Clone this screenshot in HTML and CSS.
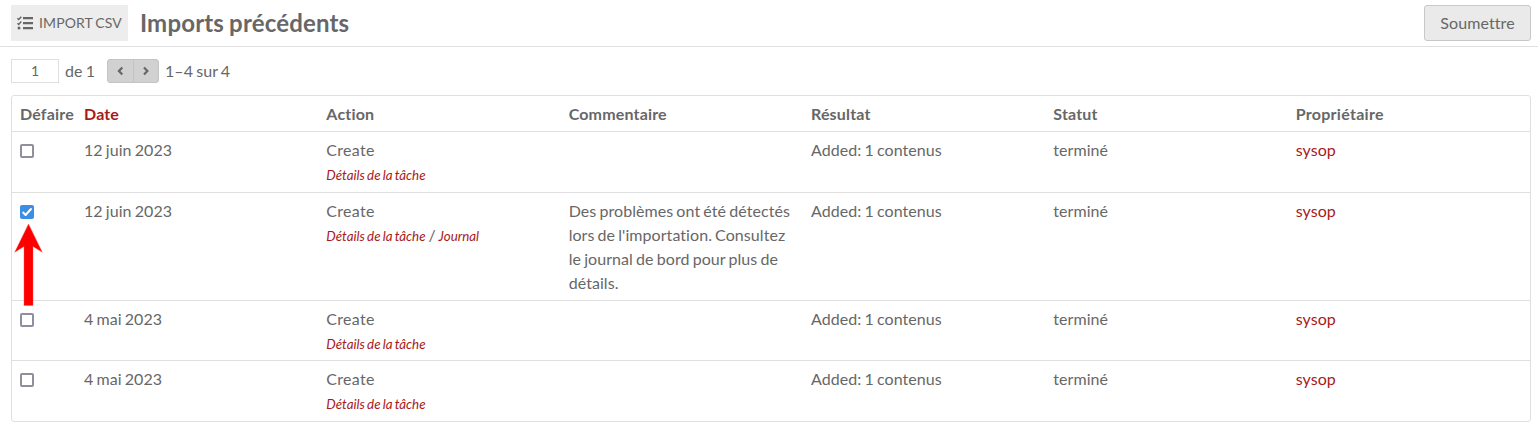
FILE: index.html
```html
<!DOCTYPE html>
<html lang="fr">
<head>
<meta charset="utf-8">
<title>Imports précédents</title>
<link rel="stylesheet" href="styles.css">
</head>
<body>
<header class="page-header">
  <span class="section-label">
    <svg class="tasks-icon" viewBox="0 0 16 14" width="16" height="14"><path d="M.4 2.3 1.7 3.5 4.3.7M.4 7.2 1.7 8.4 4.3 5.6" fill="none" stroke="currentColor" stroke-width="1.5"/><circle cx="2" cy="12" r="1.5" fill="currentColor"/><path d="M6 1h10v2.2H6zM6 6h10v2.2H6zM6 11h10v2.2H6z" fill="currentColor"/></svg>
    <span>IMPORT CSV</span>
  </span>
  <h1 class="title">Imports précédents</h1>
  <button class="submit" type="button">Soumettre</button>
</header>
<nav class="pagination">
  <span class="page-input">1</span>
  <span class="page-count">de 1</span>
  <span class="pager">
    <span class="arrow"><svg viewBox="0 0 8 10" width="8" height="10"><path d="M6.3 1.5 2.9 5l3.4 3.5"/></svg></span>
    <span class="arrow"><svg viewBox="0 0 8 10" width="8" height="10"><path d="M2 1.5 5.4 5 2 8.5"/></svg></span>
  </span>
  <span class="row-count">1–4 sur 4</span>
</nav>
<main class="table">
  <div class="row head">
    <div class="cell">Défaire</div><div class="cell"><a class="link">Date</a></div><div class="cell">Action</div><div class="cell">Commentaire</div><div class="cell">Résultat</div><div class="cell">Statut</div><div class="cell owner">Propriétaire</div>
  </div>
  <div class="row tall">
    <div class="cell"><span class="check"></span></div><div class="cell">12 juin 2023</div>
    <div class="cell"><span class="action">Create</span><div class="details"><a class="link">Détails de la tâche</a></div></div>
    <div class="cell"></div><div class="cell">Added: 1 contenus</div><div class="cell">terminé</div><div class="cell"><a class="link">sysop</a></div>
  </div>
  <div class="row">
    <div class="cell"><span class="check checked"><svg viewBox="0 0 14 14" width="14" height="14"><path d="M3.2 7.5 5.6 10l5.4-6"/></svg></span>
      <svg class="pointer" viewBox="0 0 30 84" width="30" height="84"><path d="M14.5 1 28.3 29.2 19 23.5V82.5H10V23.5L.7 29.2z"/></svg>
    </div><div class="cell">12 juin 2023</div>
    <div class="cell"><span class="action">Create</span><div class="details"><a class="link">Détails de la tâche</a><span class="slash"> / </span><a class="link">Journal</a></div></div>
    <div class="cell">Des problèmes ont été détectés lors de l'importation. Consultez le journal de bord pour plus de détails.</div><div class="cell">Added: 1 contenus</div><div class="cell">terminé</div><div class="cell"><a class="link">sysop</a></div>
  </div>
  <div class="row">
    <div class="cell"><span class="check"></span></div><div class="cell">4 mai 2023</div>
    <div class="cell"><span class="action">Create</span><div class="details"><a class="link">Détails de la tâche</a></div></div>
    <div class="cell"></div><div class="cell">Added: 1 contenus</div><div class="cell">terminé</div><div class="cell"><a class="link">sysop</a></div>
  </div>
  <div class="row tall">
    <div class="cell"><span class="check"></span></div><div class="cell">4 mai 2023</div>
    <div class="cell"><span class="action">Create</span><div class="details"><a class="link">Détails de la tâche</a></div></div>
    <div class="cell"></div><div class="cell">Added: 1 contenus</div><div class="cell">terminé</div><div class="cell"><a class="link">sysop</a></div>
  </div>
</main>
</body>
</html>
```
FILE: styles.css
```css
* { box-sizing: border-box; }
body { margin: 0; background: #fff; color: #676767; font: 16px/24px Lato, sans-serif; font-variant-ligatures: none; letter-spacing: .06px; word-spacing: -1px; overflow: hidden; }
.page-header { display: flex; align-items: center; height: 47px; padding: 0 7px 1px 11px; border-bottom: 1px solid #dfdfdf; }
.section-label { display: flex; align-items: center; gap: 6px; width: 117px; height: 36px; padding-left: 6px; background: #ededed; font-size: 14px; letter-spacing: .12px; white-space: nowrap; }
.tasks-icon { flex: none; }
.title { margin: 0 0 0 12px; font-size: 24px; line-height: 36px; font-weight: 700; letter-spacing: .17px; }
.submit { width: 107px; height: 36px; margin-left: auto; padding: 0; border: 1px solid #c8c8c8; border-radius: 3px; background: #eaeaea; color: inherit; font: inherit; font-variant-ligatures: none; letter-spacing: .08px; }
.pagination { display: flex; align-items: center; height: 24px; margin: 12px 0 12px 11px; }
.page-input { width: 48px; height: 24px; border: 1px solid #dfdfdf; font-size: 14px; line-height: 22px; text-align: center; }
.page-count { width: 48px; padding-left: 6px; white-space: nowrap; }
.pager { display: flex; width: 52px; height: 24px; border: 1px solid #c4c4c4; border-radius: 3px; background: #d1d1d1; }
.arrow { display: flex; align-items: center; justify-content: center; flex: 1; }
.arrow + .arrow { border-left: 1px solid #c4c4c4; }
.arrow path { fill: none; stroke: #676767; stroke-width: 2.2; }
.row-count { margin-left: 6px; }
.table { margin: 0 7px 0 11px; border: 1px solid #dfdfdf; border-radius: 3px; }
.row { display: grid; grid-template-columns: 64px repeat(6, 1fr); min-height: 60px; border-bottom: 1px solid #dfdfdf; }
.tall { min-height: 61px; }
.row:last-child { min-height: 60px; border-bottom: 0; }
.cell { position: relative; padding: 6px 8px 5px; min-width: 0; }
.head { min-height: 36px; font-weight: 700; letter-spacing: .17px; white-space: nowrap; }
.owner { letter-spacing: .28px; }
.link { color: #a91919; }
.action { letter-spacing: .3px; }
.details { font-size: 13.33px; font-style: italic; letter-spacing: 0; word-spacing: -.9px; height: 24px; line-height: 26px; }
.slash { font-size: 16px; font-style: normal; line-height: 1; letter-spacing: -.2px; }
.check { display: block; width: 14px; height: 14px; margin-top: 6px; border: 2px solid #8f8f9d; border-radius: 2px; background: #fff; }
.checked { border: 0; background: #3a8ee6; }
.checked svg { display: block; }
.checked path { fill: none; stroke: #fff; stroke-width: 2; stroke-linecap: round; stroke-linejoin: round; }
.pointer { position: absolute; left: 2px; top: 30px; z-index: 1; }
.pointer path { fill: #f00; stroke: #ff5050; stroke-width: .4; }
```
